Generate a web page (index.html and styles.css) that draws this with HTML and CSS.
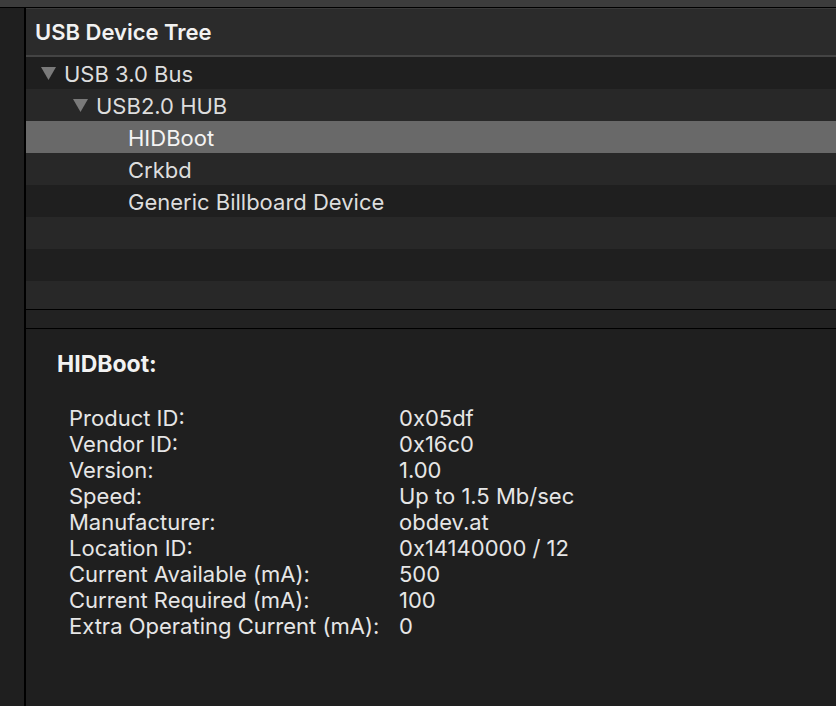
FILE: index.html
```html
<!DOCTYPE html>
<html lang="en">
<head>
    <meta charset="UTF-8">
    <title>USB Device Tree</title>
    <link rel="stylesheet" href="styles.css">
</head>
<body>
    <div class="titlebar"></div>
    <div class="window">
        <div class="sidebar"></div>
        <div class="main">
            <div class="tree-header">USB Device Tree</div>
            <div class="tree">
                <div class="row level-1">
                    <svg class="disclosure" width="15" height="13" viewBox="0 0 15 13"><polygon points="0,0 15,0 7.5,13" fill="#7a7a7a"/></svg>
                    <span>USB 3.0 Bus</span>
                </div>
                <div class="row level-2">
                    <svg class="disclosure" width="15" height="13" viewBox="0 0 15 13"><polygon points="0,0 15,0 7.5,13" fill="#7a7a7a"/></svg>
                    <span>USB2.0 HUB</span>
                </div>
                <div class="row level-3 selected"><span>HIDBoot</span></div>
                <div class="row level-3"><span>Crkbd</span></div>
                <div class="row level-3"><span>Generic Billboard Device</span></div>
                <div class="row"></div>
                <div class="row"></div>
                <div class="row"></div>
            </div>
            <div class="splitter"></div>
            <div class="details">
                <h2>HIDBoot:</h2>
                <dl class="props">
                    <dt>Product ID:</dt><dd>0x05df</dd>
                    <dt>Vendor ID:</dt><dd>0x16c0</dd>
                    <dt>Version:</dt><dd>1.00</dd>
                    <dt>Speed:</dt><dd>Up to 1.5 Mb/sec</dd>
                    <dt>Manufacturer:</dt><dd>obdev.at</dd>
                    <dt>Location ID:</dt><dd>0x14140000 / 12</dd>
                    <dt>Current Available (mA):</dt><dd>500</dd>
                    <dt>Current Required (mA):</dt><dd>100</dd>
                    <dt>Extra Operating Current (mA):</dt><dd>0</dd>
                </dl>
            </div>
        </div>
    </div>
</body>
</html>
```

FILE: styles.css
```css
html, body {
    margin: 0;
    padding: 0;
    height: 100%;
    overflow: hidden;
}

body {
    font-family: Inter, "Noto Sans", sans-serif;
    background-color: #1f1f1f;
    color: #dddddd;
    display: flex;
    flex-direction: column;
}

.titlebar {
    height: 7px;
    background-color: #3c3c3c;
    border-bottom: 1px solid #000;
    flex-shrink: 0;
}

.window {
    flex: 1;
    display: flex;
}

.sidebar {
    width: 24px;
    background-color: #1f1f1f;
    border-right: 2px solid #000;
}

.main {
    flex: 1;
    display: flex;
    flex-direction: column;
}

.tree-header {
    height: 46px;
    border-top: 1px solid #3a3a3a;
    border-bottom: 2px solid #444;
    background-color: #2b2b2b;
    padding-left: 9px;
    font-size: 22px;
    font-weight: 600;
    line-height: 46px;
    color: #f2f2f2;
}

.tree {
    height: 252px;
    overflow: hidden;
}

.row {
    height: 32px;
    display: flex;
    align-items: center;
    font-size: 22px;
    background-color: #1f1f1f;
    padding-top: 1px;
    box-sizing: border-box;
}

.row:nth-child(even) {
    background-color: #282828;
}

.row.selected {
    background-color: #696969;
    color: #f4f4f4;
}

.disclosure {
    margin-right: 8px;
}

.level-1 {
    padding-left: 15px;
}

.level-2 {
    padding-left: 47px;
}

.level-3 {
    padding-left: 102px;
}

.splitter {
    height: 18px;
    background-color: #222;
    border-top: 1px solid #000;
    border-bottom: 1px solid #000;
}

.details {
    padding: 21px 0 0 31px;
}

.details h2 {
    margin: 0 0 27px;
    font-size: 23px;
    font-weight: 700;
    line-height: 28px;
    color: #f2f2f2;
}

.props {
    display: grid;
    grid-template-columns: 330px auto;
    margin: 0 0 0 12px;
    font-size: 22px;
    line-height: 26px;
    color: #e6e6e6;
}

.props dt, .props dd {
    margin: 0;
}
```
